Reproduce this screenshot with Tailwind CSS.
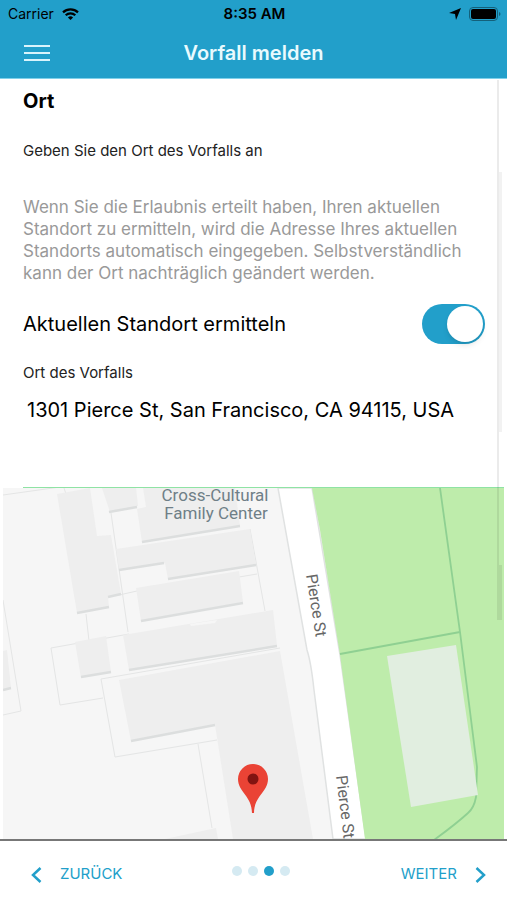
<!DOCTYPE html>
<html lang="de">
<head>
  <meta charset="utf-8">
  <meta name="viewport" content="width=device-width, initial-scale=1">
  <title>Vorfall melden</title>
  <script src="https://cdn.jsdelivr.net/npm/@tailwindcss/browser@4"></script>
</head>
<body class="font-[Inter,sans-serif] bg-white text-black">
  <div class="relative flex flex-col min-h-screen">

    <header class="bg-[#229fca] border-b border-[#7fd0ea]">
      <!-- Status bar -->
      <div class="grid grid-cols-[1fr_auto_1fr] items-center h-7 pl-2 pr-[6px] text-sm">
        <div class="flex items-center gap-2">
          <span>Carrier</span>
          <svg class="w-[17px] h-3" viewBox="0 0 17 12" fill="none" stroke="#000" stroke-width="2.2">
            <path d="M1 4.4a11 11 0 0 1 15 0" />
            <path d="M3.7 7.3a7 7 0 0 1 9.6 0" />
            <path d="M8.5 12 5.9 9.4a3.8 3.8 0 0 1 5.2 0z" fill="#000" stroke="none" />
          </svg>
        </div>
        <span class="text-[15px] font-semibold">8:35 AM</span>
        <div class="flex items-center justify-end gap-2">
          <svg class="w-3 h-3" viewBox="0 0 12 12"><path d="M12 0 7 12 6 6 0 5z" /></svg>
          <svg class="w-8 h-[14px]" viewBox="0 0 32 14">
            <rect x=".5" y=".5" width="28" height="13" rx="3.5" fill="none" stroke="#14607a" />
            <rect x="2" y="2" width="25" height="10" rx="2" />
            <path d="M30 5v4q1.500-.5 1.500-2t-1.500-2" fill="#14607a" />
          </svg>
        </div>
      </div>
      <!-- Nav bar -->
      <div class="grid grid-cols-[1fr_auto_1fr] items-center h-[50px] px-6">
        <button type="button" aria-label="Menü" class="justify-self-start">
          <svg class="w-[26px] h-4" viewBox="0 0 26 16" stroke="#d9f4fc" stroke-width="2"><path d="M0 1h26M0 8h26M0 15h26" /></svg>
        </button>
        <h1 class="text-xl font-semibold text-[#e9fafe]">Vorfall melden</h1>
      </div>
    </header>

    <main class="flex flex-col grow">
      <form class="flex flex-col pl-[23px]">
        <h2 class="mt-2 text-xl leading-7 font-bold">Ort</h2>
        <p class="mt-6 text-[15px] leading-6 text-[#222]">Geben Sie den Ort des Vorfalls an</p>
        <p class="mt-[33px] mr-[23px] text-[17px] leading-[22px] text-[#999]">Wenn Sie die Erlaubnis erteilt haben, Ihren aktuellen Standort zu ermitteln, wird die Adresse Ihres aktuellen Standorts automatisch eingegeben. Selbstverständlich kann der Ort nachträglich geändert werden.</p>
        <label class="flex items-center justify-between mt-5 mr-[22px] text-xl">
          <span>Aktuellen Standort ermitteln</span>
          <input type="checkbox" role="switch" checked class="appearance-none w-[63px] h-10 rounded-full bg-gray-300 checked:bg-[#229fca] before:block before:size-9 before:m-[2px] before:rounded-full before:bg-white before:shadow-md checked:before:ml-[25px]">
        </label>
        <label for="ort" class="mt-[17px] text-[15px] leading-6 text-[#222]">Ort des Vorfalls</label>
        <div class="mt-1 mr-[3px] pb-px bg-[#8fe3a4]">
          <textarea id="ort" class="block w-full h-[98px] px-1 py-[7px] bg-white text-xl leading-7 resize-none outline-none">1301 Pierce St, San Francisco, CA 94115, USA</textarea>
        </div>
      </form>

      <div class="flex grow mx-[3px]">
        <svg class="w-full h-[351px] bg-[#f6f6f6]" viewBox="3 488 501 351" preserveAspectRatio="xMidYMid slice" role="img" aria-label="Karte">
          <!-- Parcel boundaries -->
          <g fill="none" stroke="#e4e5e5">
            <path d="M3 495 60 487M64 488l2 6M111 513l17 119M86 614l3 27M119 595l18-4M239 577l18-3M250 529l15 82M3 600l18 111-18 4" />
            <path d="M280 648 101 679l14 78 102-17M51 648l78-14M51 648l9 57 43-7M198 744l14 84" />
          </g>
          <!-- Buildings -->
          <g fill="#eee">
            <path d="M57 494 90 488l7 48 14-1 10 59-13 3 1 10-32 6z" />
            <path d="M102 488h34l2 18-28 6zM143 488h92l5 38-98 16-5-33 9-2z" />
            <path d="M116 549 250 529l6 36-88 14-3-16-46 7z" />
            <path d="M136 588 239 571l4 31-102 19zM123 635 273 610l4 36-148 24z" />
            <path d="M75 642 106 636l5 36-30 6zM3 651l4-1 4 38-8 2z" />
            <path d="M119 680 280 651 313 839h-80l-18-114-84 16zM165 839l51-11 2 11z" />
          </g>
          <g fill="none" stroke="#dcdede" stroke-width="2.500">
            <path d="M77 613l32-6M108 597l13-3M109 512l28-5M142 542l98-16M119 570l45-7M168 579l88-14" />
            <path d="M141 621l102-18M129 670l148-24M81 677l30-5M131 741l84-16M3 690l8-2" />
          </g>
          <path d="M190 624l27-4-2 3-24 3z" fill="#f6f6f6" />
          <!-- Street -->
          <path d="M278 488 307 650q4 12 7 40L333 839h33L340 655 312 488z" fill="#fff" stroke="#e0e2e2" stroke-width="1.500" />
          <!-- Park -->
          <path d="M312 488h192v351H365L340 655 320 530z" fill="#beecab" />
          <path d="M440 488l20 144 17 135-1 30q-2 11-8 16-12 11-34 27M340 654l120-22" fill="none" stroke="#8fd092" stroke-width="1.800" />
          <path d="M387 656l69-11 22 150-67 12z" fill="#e1eee0" />
          <!-- Labels -->
          <g class="font-[Roboto,sans-serif]" fill="#666">
            <text class="text-[17px]" text-anchor="middle" fill="#6f7f87"><tspan x="215" y="501">Cross-Cultural</tspan><tspan x="216" y="519">Family Center</tspan></text>
            <text class="text-base" transform="translate(306 575) rotate(81)">Pierce St</text>
            <text class="text-base" transform="translate(336 776) rotate(83)">Pierce St</text>
          </g>
          <!-- Marker -->
          <path d="M253 764a15 15 0 0 1 15 15c0 13-14 17-14 34h-2c0-17-14-21-14-34a15 15 0 0 1 15-15z" fill="#ea4335" />
          <circle cx="253" cy="779" r="5.500" fill="#811411" />
        </svg>
      </div>
    </main>

    <footer class="grid grid-cols-3 items-center h-[61px] px-[31px] pt-2 border-t-2 border-[#777] bg-white text-[15px] text-[#229fca]">
      <button type="button" class="flex items-center gap-[18px] justify-self-start">
        <svg class="w-[11px] h-4" viewBox="0 0 11 16" fill="none" stroke="currentColor" stroke-width="2.500"><path d="M9.500 1 2 8l7.500 7" /></svg>
        ZURÜCK
      </button>
      <div class="flex justify-center gap-[6px] mb-2 ml-4">
        <span class="size-[10px] rounded-full bg-[#d5eaf2]"></span>
        <span class="size-[10px] rounded-full bg-[#d5eaf2]"></span>
        <span class="size-[10px] rounded-full bg-[#229fca]"></span>
        <span class="size-[10px] rounded-full bg-[#d5eaf2]"></span>
      </div>
      <button type="button" class="flex items-center gap-[18px] justify-self-end -mr-[10px]">
        WEITER
        <svg class="w-[11px] h-4" viewBox="0 0 11 16" fill="none" stroke="currentColor" stroke-width="2.500"><path d="M1.500 1 9 8l-7.500 7" /></svg>
      </button>
    </footer>

    <!-- Scroll indicators -->
    <div class="absolute right-2 top-20 w-[2px] h-[540px] bg-black/8"></div>
    <div class="absolute right-[5px] top-[172px] w-[3px] h-[260px] bg-black/5"></div>
    <div class="absolute right-[5px] top-[565px] w-[3px] h-[55px] bg-black/8"></div>
  </div>
</body>
</html>
